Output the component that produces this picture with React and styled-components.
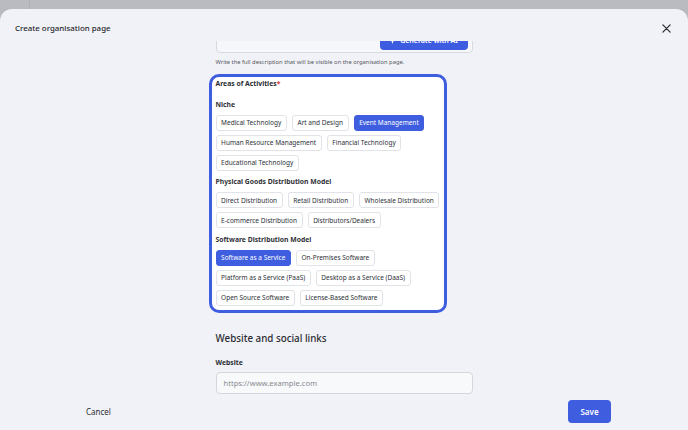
import React from 'react';
import styled, { createGlobalStyle } from 'styled-components';

const GlobalStyle = createGlobalStyle`
  html, body {
    margin: 0;
    padding: 0;
    background: #b9babf;
    font-family: "Noto Sans", "Open Sans", sans-serif;
  }
  * { box-sizing: border-box; }
`;

const Page = styled.div`
  height: 430px;
  display: flex;
  flex-direction: column;
  overflow: hidden;
`;

const TopStrip = styled.div`
  height: 9px;
  display: grid;
  grid-template-columns: 29px 1px 1fr;
  background: #babbc0;
  &::before {
    content: '';
    grid-column: 2;
    background: #aeafb4;
  }
`;

const Modal = styled.div`
  flex: 1;
  display: flex;
  flex-direction: column;
  background: #f1f2f7;
  border-radius: 12px 12px 0 0;
  min-height: 0;
`;

const Header = styled.div`
  height: 32px;
  padding: 13px 15px 7px 15px;
  display: flex;
  align-items: center;
  justify-content: space-between;
`;

const Title = styled.h1`
  margin: 0;
  font-size: 7.9px;
  line-height: 12px;
  font-weight: 500;
  color: #25272d;
`;

const CloseButton = styled.button`
  border: none;
  background: none;
  padding: 0;
  width: 12px;
  height: 12px;
  display: flex;
  align-items: center;
  justify-content: center;
  color: #2a2c31;
  margin-right: 1px;
`;

const Body = styled.div`
  flex: 1;
  min-height: 0;
  overflow: hidden;
`;

const Column = styled.div`
  width: 257px;
  margin: 0 auto;
  display: flex;
  flex-direction: column;
`;

const TextArea = styled.div`
  position: relative;
  height: 60px;
  margin-top: -48px;
  background: #f6f7fa;
  border: 1px solid #d8dae0;
  border-radius: 4px;
`;

const GenerateButton = styled.button`
  position: absolute;
  right: 4px;
  bottom: 2.5px;
  height: 19px;
  width: 88px;
  border: none;
  border-radius: 4px;
  background: #3d5ce0;
  color: #fff;
  font-family: inherit;
  font-size: 7px;
  font-weight: 600;
  display: flex;
  align-items: center;
  justify-content: center;
  gap: 4px;
`;

const Helper = styled.p`
  margin: 5px 0 0;
  font-size: 5.8px;
  line-height: 8px;
  color: #55585f;
`;

const Highlight = styled.div`
  margin: 8px 0 0 -7px;
  width: 238px;
  border: 3px solid #3e5ddf;
  border-radius: 10px;
  background: #fff;
  padding: 3px 4px 4px 4px;
`;

const FieldLabel = styled.div`
  font-size: 6.8px;
  line-height: 8px;
  font-weight: 700;
  color: #2b2d33;
  span { color: #e0323c; }
`;

const Group = styled.div`
  margin-top: ${p => (p.$first ? '11.5px' : '6.5px')};
`;

const GroupTitle = styled.div`
  font-size: 6.8px;
  line-height: 9px;
  font-weight: 700;
  color: #2f3137;
  margin-bottom: 6px;
`;

const ChipRow = styled.div`
  display: flex;
  flex-wrap: wrap;
  gap: 4px 5px;
`;

const Chip = styled.span`
  height: 16px;
  padding: 0 4.6px;
  display: inline-flex;
  align-items: center;
  border-radius: 3px;
  font-size: 6.5px;
  white-space: nowrap;
  border: 1px solid ${p => (p.$active ? '#3e5ddf' : '#e1e3e8')};
  background: ${p => (p.$active ? '#3e5ddf' : '#fff')};
  color: ${p => (p.$active ? '#fff' : '#2e3138')};
`;

const SectionTitle = styled.h2`
  margin: 19px 0 0;
  font-size: 9.8px;
  line-height: 14px;
  font-weight: 500;
  color: #2b2d33;
`;

const InputLabel = styled.label`
  margin-top: 13px;
  font-size: 6.8px;
  line-height: 8px;
  font-weight: 700;
  color: #2b2d33;
`;

const Input = styled.div`
  margin-top: 5px;
  height: 22px;
  padding: 0 7px;
  display: flex;
  align-items: center;
  background: #f8f9fb;
  border: 1px solid #d5d7dd;
  border-radius: 4px;
  font-size: 7.6px;
  color: #878a92;
`;

const Footer = styled.div`
  height: 34px;
  padding: 0 77px 4px 86px;
  display: flex;
  align-items: center;
  justify-content: space-between;
`;

const CancelButton = styled.button`
  border: none;
  background: none;
  padding: 0;
  font-family: inherit;
  font-size: 8px;
  color: #2b2d33;
`;

const SaveButton = styled.button`
  height: 23px;
  width: 43px;
  border: none;
  border-radius: 4px;
  background: #3e5ddf;
  color: #fff;
  font-family: inherit;
  font-size: 8px;
  font-weight: 600;
`;

const groups = [
  {
    title: 'Niche',
    items: ['Medical Technology', 'Art and Design', 'Event Management', 'Human Resource Management', 'Financial Technology', 'Educational Technology'],
    active: ['Event Management'],
  },
  {
    title: 'Physical Goods Distribution Model',
    items: ['Direct Distribution', 'Retail Distribution', 'Wholesale Distribution', 'E-commerce Distribution', 'Distributors/Dealers'],
    active: [],
  },
  {
    title: 'Software Distribution Model',
    items: ['Software as a Service', 'On-Premises Software', 'Platform as a Service (PaaS)', 'Desktop as a Service (DaaS)', 'Open Source Software', 'License-Based Software'],
    active: ['Software as a Service'],
  },
];

export default function App() {
  return (
    <>
      <GlobalStyle />
      <Page>
        <TopStrip />
        <Modal>
          <Header>
            <Title>Create organisation page</Title>
            <CloseButton aria-label="Close">
              <svg width="9" height="9" viewBox="0 0 10 10" fill="none" stroke="currentColor" strokeWidth="1.4" strokeLinecap="round">
                <path d="M1 1l8 8M9 1l-8 8" />
              </svg>
            </CloseButton>
          </Header>
          <Body>
            <Column>
              <TextArea>
                <GenerateButton>
                  <svg width="7" height="7" viewBox="0 0 10 10" fill="currentColor">
                    <path d="M5 0l1.2 3.8L10 5 6.2 6.2 5 10 3.8 6.2 0 5l3.8-1.2z" />
                  </svg>
                  Generate with AI
                </GenerateButton>
              </TextArea>
              <Helper>Write the full description that will be visible on the organisation page.</Helper>
              <Highlight>
                <FieldLabel>Areas of Activities<span>*</span></FieldLabel>
                {groups.map((g, i) => (
                  <Group key={g.title} $first={i === 0}>
                    <GroupTitle>{g.title}</GroupTitle>
                    <ChipRow>
                      {g.items.map(item => (
                        <Chip key={item} $active={g.active.includes(item)}>{item}</Chip>
                      ))}
                    </ChipRow>
                  </Group>
                ))}
              </Highlight>
              <SectionTitle>Website and social links</SectionTitle>
              <InputLabel>Website</InputLabel>
              <Input>https://www.example.com</Input>
            </Column>
          </Body>
          <Footer>
            <CancelButton>Cancel</CancelButton>
            <SaveButton>Save</SaveButton>
          </Footer>
        </Modal>
      </Page>
    </>
  );
}
